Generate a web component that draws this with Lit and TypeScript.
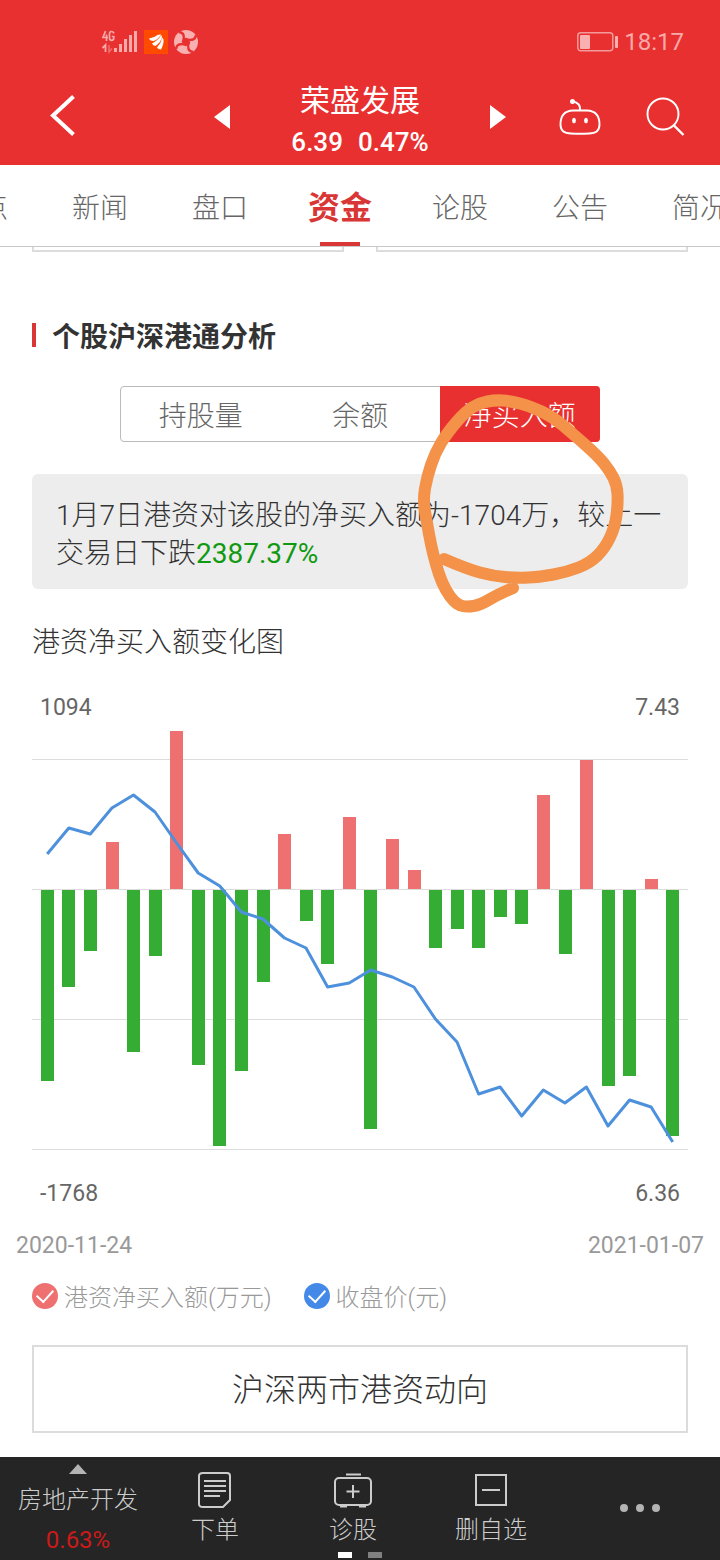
import { LitElement, html, svg, css } from "lit";
import { customElement, property, state } from "lit/decorators.js";
import { classMap } from "lit/directives/class-map.js";

/* Net purchases, as signed heights around the zero line. */
const NET_BUY = [
  -192, -98, -62, 47, -163, -67, 158, -176, -257, -182, -93, 55, -32, -75, 72,
  -240, 50, 19, -59, -40, -59, -28, -35, 94, -65, 129, -197, -187, 10, -247,
];

/* Closing price, as distance below the top of the plot. */
const CLOSE = [
  134, 108, 114, 88, 75, 92, 123, 153, 166, 192, 199, 218, 228, 267, 263,
  250, 257, 267, 299, 322, 374, 367, 396, 370, 383, 367, 406, 380, 387, 422,
];

const MARK: [number, number][] = [
  [444, 559], [467, 569], [493, 576], [517, 578], [540, 577], [567, 572], [590, 563],
  [605, 548], [615, 527], [618, 503], [617, 485], [610, 471], [598, 456], [573, 434],
  [553, 417], [530, 406], [510, 401], [495, 400], [480, 403], [466, 411], [447, 433],
  [435, 453], [427, 477], [423, 500], [427, 523], [431, 545], [436, 565], [442, 583],
  [450, 597], [458, 605], [467, 607], [480, 605], [497, 595], [513, 588],
];

function smooth(points: [number, number][]): string {
  let d = `M${points[0][0]} ${points[0][1]}`;
  for (let i = 1; i < points.length - 1; i++) {
    const [x, y] = points[i];
    const [nx, ny] = points[i + 1];
    d += ` Q${x} ${y} ${(x + nx) / 2} ${(y + ny) / 2}`;
  }
  const last = points[points.length - 1];
  return `${d} L${last[0]} ${last[1]}`;
}

@customElement("flow-chart")
class FlowChart extends LitElement {
  @property({ type: Boolean }) bars = true;
  @property({ type: Boolean }) line = true;

  static styles = css`
    :host { display: block; }
    .plot { display: block; width: 100%; height: auto; }
    .grid { stroke: #dcdcdc; stroke-width: 1; }
    .up { fill: #ef7070; }
    .down { fill: #35ad35; }
    .price { fill: none; stroke: #4d90dc; stroke-width: 3; stroke-linejoin: round; }
  `;

  render() {
    const step = 625.5 / (NET_BUY.length - 1);
    const x = (i: number) => 15.2 + i * step;
    const points = CLOSE.map((y, i) => `${x(i).toFixed(1)},${y}`).join(" ");
    return html`
      <svg class="plot" viewBox="0 1 656 439" role="img" aria-label="港资净买入额变化图">
        ${[39.5, 169.5, 299.5, 429.5].map(
          (y) => svg`<line class="grid" x1="0" x2="656" y1=${y} y2=${y}></line>`
        )}
        ${this.bars
          ? NET_BUY.map(
              (v, i) => svg`<rect class=${v > 0 ? "up" : "down"} x=${Math.round(x(i) - 6.3)}
                y=${v > 0 ? 169 - v : 170} width="13" height=${v > 0 ? v : -v - 1}></rect>`
            )
          : null}
        ${this.line ? svg`<polyline class="price" points=${points}></polyline>` : null}
      </svg>
    `;
  }
}

@customElement("app-root")
class AppRoot extends LitElement {
  @state() private tab = "资金";
  @state() private metric = "净买入额";
  @state() private showBars = true;
  @state() private showLine = true;

  static styles = css`
    :host {
      display: block;
      position: relative;
      background: #fff;
      color: #333;
      font-family: Roboto, "Noto Sans CJK SC", sans-serif;
      font-size: 28px;
      font-weight: 300;
      overflow: hidden;
    }
    * { box-sizing: border-box; }
    button { font: inherit; color: inherit; background: none; border: 0; padding: 0; margin: 0; cursor: pointer; }
    a { color: inherit; text-decoration: none; }
    h1, h2, h3, p { margin: 0; font-weight: inherit; font-size: inherit; }
    svg { display: block; }

    .header { background: #e93030; color: #fff; height: 165px; }
    .status { display: flex; justify-content: space-between; align-items: center; height: 84px; padding: 0 36px 0 101px; }
    .status-side { display: flex; align-items: center; gap: 6px; }
    .clock { font-size: 24px; font-weight: 400; line-height: 28px; color: #f8a9a9; }
    .nav { display: grid; grid-template-columns: 1fr 308px 1fr; grid-template-rows: 66px; align-items: center; }
    .nav-side { display: flex; align-items: center; padding-left: 48px; }
    .nav-end { justify-content: flex-end; gap: 44px; padding: 0 35px 0 0; }
    .stock { padding: 0 8px; display: flex; align-items: center; justify-content: space-between; }
    .stock-text { text-align: center; padding-top: 6px; }
    .stock-name { font-size: 30px; line-height: 44px; font-weight: 400; }
    .quote { display: flex; gap: 15px; font-size: 26px; line-height: 38px; font-weight: 500; }

    .tabs { display: flex; height: 82px; border-bottom: 1px solid #c8c8c8; overflow: hidden; }
    .tabs-track { display: flex; margin-left: -80px; }
    .tab { width: 120px; height: 81px; flex: none; display: flex; flex-direction: column; align-items: center; color: #666; line-height: 88px; position: relative; }
    .tab-on { color: #d93636; font-size: 32px; font-weight: 700; line-height: 86px; }
    .tab-on::after { content: ""; position: absolute; bottom: 0; width: 40px; height: 4px; background: #d93636; }

    .cards { display: grid; grid-template-columns: 1fr 1fr; gap: 32px; padding: 0 32px; }
    .card { height: 5px; border: 2px solid #dcdcdc; border-top: 0; }

    .section { display: flex; flex-direction: column; padding: 65px 32px 24px; }
    .title { display: flex; align-items: center; gap: 16px; line-height: 42px; font-weight: 700; }
    .title::before { content: ""; width: 4px; height: 24px; margin-bottom: 6px; background: #d93636; }

    .segments { display: grid; grid-template-columns: 1fr 1fr 1fr; width: 480px; align-self: center; margin-top: 27px; height: 56px; border: 1px solid #bbb; border-radius: 4px; }
    .segment { color: #666; line-height: 48px; padding-top: 6px; }
    .segment-on { margin: -1px -1px -1px 0; border-radius: 0 4px 4px 0; background: #e93030; color: #fff; }

    .notice { margin-top: 32px; padding: 23px 24px 16px; border-radius: 6px; background: #ededed; line-height: 38px; }
    .fall { color: #119911; font-weight: 400; }
    .chart-title { margin-top: 33px; line-height: 42px; }

    .axis { display: flex; justify-content: space-between; padding: 0 8px; font-size: 23px; line-height: 30px; font-weight: 400; color: #666; }
    .axis-top { margin-top: 29px; margin-bottom: -2px; }
    .axis-low { margin-top: 19px; }
    .dates { margin: 22px -16px 0; padding: 0; color: #999; }

    .legend { display: flex; gap: 32px; margin-top: 17px; font-size: 24px; line-height: 36px; color: #999; }
    .legend-item { display: flex; align-items: center; gap: 6px; }
    .legend-text { line-height: 32px; padding-top: 4px; }
    .tick { appearance: none; margin: 0; width: 26px; height: 26px; border-radius: 50%; background: #ccc; display: grid; place-items: center; }
    .tick::after { content: ""; width: 8px; height: 14px; margin-bottom: 5px; border: solid #fff; border-width: 0 2px 2px 0; transform: rotate(42deg); }
    .tick-red:checked { background: #ef7070; }
    .tick-blue:checked { background: #4489e8; }

    .more-link { margin-top: 31px; border: 2px solid #dcdcdc; height: 88px; line-height: 87px; text-align: center; font-size: 32px; }

    .toolbar { display: grid; grid-template-columns: 146fr 138fr 138fr 138fr 160fr; height: 103px; background: #252525; color: #ccc; font-size: 24px; line-height: 32px; position: relative; }
    .tool { display: flex; flex-direction: column; align-items: center; padding-top: 14px; gap: 5px; }
    .sector { padding: 7px 0 0 10px; gap: 0; }
    .sector-name { line-height: 36px; padding-top: 8px; }
    .sector-rate { color: #cc1a1a; font-weight: 400; line-height: 28px; padding-top: 8px; }
    .dots { justify-content: center; padding: 0 0 2px; }
    .pager { position: absolute; bottom: 2px; left: 50%; display: flex; gap: 16px; transform: translateX(-50%); }
    .page { width: 14px; height: 6px; background: #808080; }
    .page-on { background: #fff; }

    .mark { position: absolute; top: 0; left: 0; pointer-events: none; }
  `;

  private renderStatus() {
    return html`
      <div class="status">
        <div class="status-side">
          <svg width="37" height="24" viewBox="0 0 37 24" fill="#f8a9a9" aria-label="4G">
            <path d="M4.500 1L2 7.500H7M5.500 4.500V11M12.800 3.500Q12.500 1.500 10.500 1.500Q8.500 1.500 8.500 4V8Q8.500 10.300 10.600 10.300Q12.800 10.300 12.800 8V6.500H10.800" fill="none" stroke="#f8a9a9" stroke-width="1.700"/>
            <path d="M1.500 18L4.500 15V22" fill="none" stroke="#f8a9a9" stroke-width="1.800"/>
            <path d="M8 15V22L11 18.500" fill="none" stroke="#f07070" stroke-width="1.500"/>
            <rect x="13" y="18" width="3" height="4"/><rect x="18" y="14" width="3" height="8"/>
            <rect x="23" y="9" width="3" height="13"/><rect x="28" y="5" width="3" height="17"/><rect x="33" y="1" width="3" height="21"/>
          </svg>
          <svg width="24" height="24" viewBox="0 0 24 24" aria-hidden="true">
            <rect width="24" height="24" fill="#ff4a00"/>
            <path d="M5 8.500Q10 8 13.500 5L17 4.200Q15 9 9.500 11Q6 11 5 8.500ZM8 13.500Q14 10.500 17.200 5L18 7Q17.500 11.500 11.500 16Q9 15.500 8 13.500ZM13 17.500Q17 13.500 18.300 7.500L19.500 9.500Q20 14 17 19.500Q14 19.500 13 17.500Z" fill="#fff"/>
          </svg>
          <svg width="24" height="24" viewBox="0 0 24 24" aria-hidden="true">
            <circle cx="12" cy="12" r="12" fill="#f9b0b0"/>
            <path d="M12 7.500L16.500 12L12 16.500L7.500 12Z" fill="#e93030"/>
            ${[0, 90, 180, 270].map(
              (a) => svg`<path d="M12 9Q15.500 10.500 19 9.500Q21.500 8.500 22 5" fill="none" stroke="#e93030" stroke-width="2.4" transform="rotate(${a} 12 12)"></path>`
            )}
          </svg>
        </div>
        <div class="status-side">
          <svg width="42" height="20" viewBox="0 0 42 20" aria-label="电量">
            <rect x="1.800" y="0.800" width="35" height="18" rx="3" fill="none" stroke="#f59a9a" stroke-width="1.500"/>
            <rect x="4" y="3" width="10" height="14" rx="1" fill="#f9b0b0"/>
            <rect x="39" y="4" width="3" height="12" rx="1" fill="#f9b0b0"/>
          </svg>
          <span class="clock">18:17</span>
        </div>
      </div>
    `;
  }

  private renderNav() {
    return html`
      <div class="nav">
        <div class="nav-side">
          <button aria-label="返回">
            <svg width="30" height="44" viewBox="0 0 30 44" fill="none" stroke="#fff" stroke-width="4"><path d="M25.500 1.500L5 20.500L25.500 39.500"/></svg>
          </button>
        </div>
        <div class="stock">
          <button aria-label="上一只"><svg width="16" height="24" viewBox="0 0 16 24" fill="#fff"><path d="M16 0V24L0 12Z"/></svg></button>
          <div class="stock-text">
            <h1 class="stock-name">荣盛发展</h1>
            <div class="quote"><span>6.39</span><span>0.47%</span></div>
          </div>
          <button aria-label="下一只"><svg width="16" height="24" viewBox="0 0 16 24" fill="#fff"><path d="M0 0V24L16 12Z"/></svg></button>
        </div>
        <div class="nav-side nav-end">
          <button aria-label="智能助手">
            <svg width="42" height="38" viewBox="0 0 42 38" fill="none" stroke="#fff" stroke-width="1.900">
              <path d="M14 12.500H28Q40.500 13 40.500 26.500Q40.500 35.500 30 35.500Q21 36 12 35.500Q1.500 35.500 1.500 26.500Q1.500 13 14 12.500Z"/>
              <path d="M21 12.500Q22 4.500 13 3.500"/><circle cx="13.500" cy="3.500" r="2.500" fill="#fff" stroke="none"/>
              <ellipse cx="15" cy="22.500" rx="1.900" ry="2.700" fill="#fff" stroke="none"/><ellipse cx="27" cy="22.500" rx="1.900" ry="2.700" fill="#fff" stroke="none"/>
            </svg>
          </button>
          <button aria-label="搜索">
            <svg width="40" height="40" viewBox="0 0 40 40" fill="none" stroke="#fff" stroke-width="1.900"><circle cx="18" cy="17" r="15.500"/><path d="M28.500 28L38.500 38" stroke-width="2.400"/></svg>
          </button>
        </div>
      </div>
    `;
  }

  private renderToolbar() {
    return html`
      <nav class="toolbar">
        <button class="tool sector">
          <svg width="18" height="10" viewBox="0 0 18 10" fill="#b4b4b4"><path d="M9 0L18 10H0Z"/></svg>
          <span class="sector-name">房地产开发</span>
          <span class="sector-rate">0.63%</span>
        </button>
        <button class="tool">
          <svg width="38" height="38" viewBox="0 0 38 38" fill="none" stroke="#ccc" stroke-width="2">
            <path d="M7 2H31Q34 2 34 5V29L27 36H7Q3 36 3 33V5Q3 2 7 2Z"/>
            <path d="M8 10H30M8 15H30M8 20H30M8 25H24"/>
          </svg>
          <span>下单</span>
        </button>
        <button class="tool">
          <svg width="40" height="38" viewBox="0 0 40 38" fill="none" stroke="#ccc" stroke-width="2">
            <rect x="2" y="7" width="36" height="27" rx="4"/>
            <path d="M13 3.500H28M20 14V27M13.500 20.500H26.500M7 35.500H14M26 35.500H33"/>
          </svg>
          <span>诊股</span>
        </button>
        <button class="tool">
          <svg width="38" height="38" viewBox="0 0 38 38" fill="none" stroke="#ccc" stroke-width="2">
            <rect x="4" y="4" width="30" height="30"/><path d="M10 19H28"/>
          </svg>
          <span>删自选</span>
        </button>
        <button class="tool dots" aria-label="更多">
          <svg width="40" height="8" viewBox="0 0 40 8" fill="#b4b4b4"><circle cx="4" cy="4" r="4"/><circle cx="20" cy="4" r="4"/><circle cx="36" cy="4" r="4"/></svg>
        </button>
        <div class="pager"><span class="page page-on"></span><span class="page"></span></div>
      </nav>
    `;
  }

  render() {
    return html`
      <header class="header">${this.renderStatus()}${this.renderNav()}</header>
      <nav class="tabs">
        <div class="tabs-track">
          ${["焦点", "新闻", "盘口", "资金", "论股", "公告", "简况"].map(
            (name) => html`<a href="#" class=${classMap({ tab: true, "tab-on": name === this.tab })}
              @click=${(e: Event) => { e.preventDefault(); this.tab = name; }}>${name}</a>`
          )}
        </div>
      </nav>
      <div class="cards"><div class="card"></div><div class="card"></div></div>
      <main class="section">
        <h2 class="title">个股沪深港通分析</h2>
        <div class="segments">
          ${["持股量", "余额", "净买入额"].map(
            (name) => html`<button class=${classMap({ segment: true, "segment-on": name === this.metric })}
              @click=${() => { this.metric = name; }}>${name}</button>`
          )}
        </div>
        <p class="notice">1月7日港资对该股的净买入额为-1704万，较上一交易日下跌<span class="fall">2387.37%</span></p>
        <h3 class="chart-title">港资净买入额变化图</h3>
        <div class="axis axis-top"><span>1094</span><span>7.43</span></div>
        <flow-chart .bars=${this.showBars} .line=${this.showLine}></flow-chart>
        <div class="axis axis-low"><span>-1768</span><span>6.36</span></div>
        <div class="axis dates"><span>2020-11-24</span><span>2021-01-07</span></div>
        <div class="legend">
          <label class="legend-item"><input class="tick tick-red" type="checkbox" .checked=${this.showBars}
            @change=${() => { this.showBars = !this.showBars; }} /><span class="legend-text">港资净买入额(万元)</span></label>
          <label class="legend-item"><input class="tick tick-blue" type="checkbox" .checked=${this.showLine}
            @change=${() => { this.showLine = !this.showLine; }} /><span class="legend-text">收盘价(元)</span></label>
        </div>
        <a class="more-link" href="#">沪深两市港资动向</a>
      </main>
      ${this.renderToolbar()}
      <svg class="mark" width="720" height="640" viewBox="0 0 720 640" fill="none" stroke="#f39248" stroke-width="12" stroke-linecap="round" stroke-linejoin="round" aria-hidden="true">
        <path d=${smooth(MARK)}/>
      </svg>
    `;
  }
}
